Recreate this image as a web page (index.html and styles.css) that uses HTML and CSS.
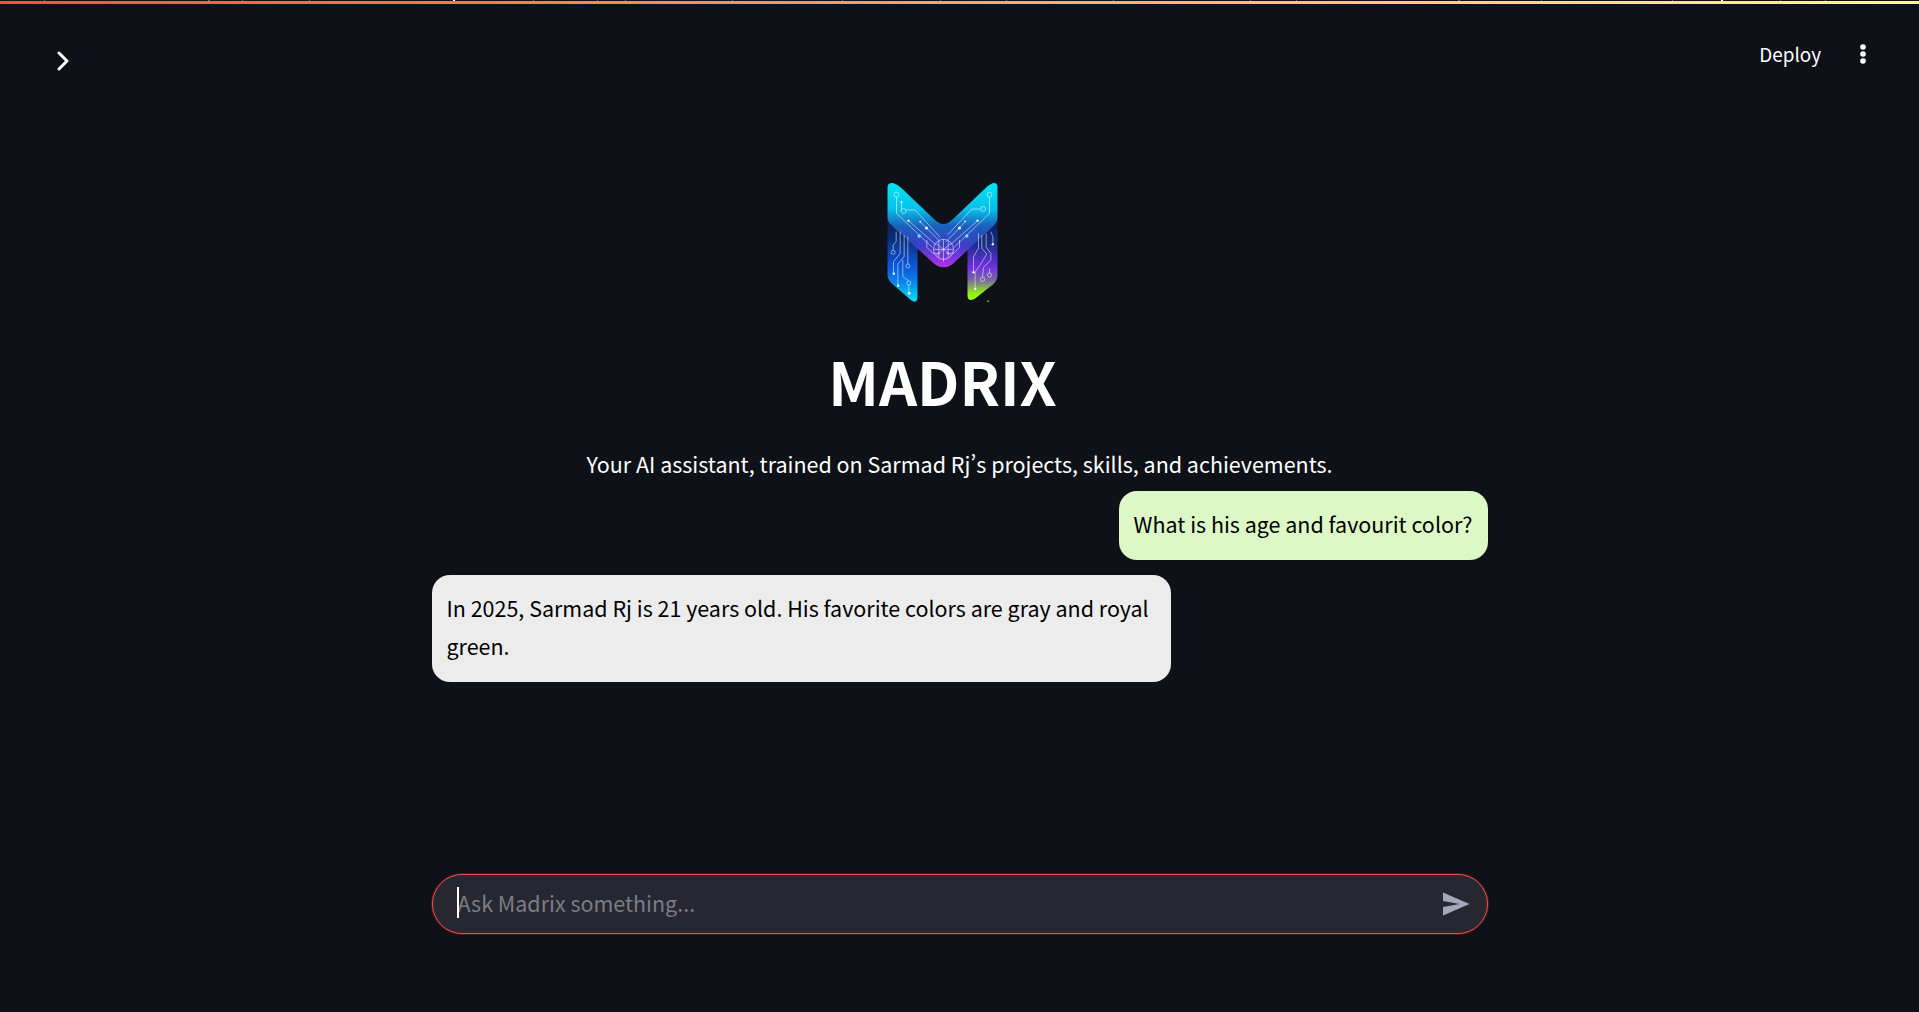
FILE: index.html
```html
<!DOCTYPE html>
<html lang="en">
<head>
  <meta charset="UTF-8">
  <meta name="viewport" content="width=device-width, initial-scale=1.0">
  <title>Madrix</title>
  <link rel="stylesheet" href="styles.css">
</head>
<body>
  <svg class="ticks" width="1919" height="1" viewBox="0 0 1919 1">
    <g fill="#6a6a6a">
      <rect x="44" width="1" height="1"/>
      <rect x="208" width="2" height="1"/>
      <rect x="242" width="1" height="1"/>
      <rect x="309" width="1" height="1"/>
      <rect x="533" width="1" height="1"/>
      <rect x="597" width="1" height="1"/>
      <rect x="625" width="1" height="1"/>
      <rect x="732" width="1" height="1"/>
      <rect x="842" width="1" height="1"/>
      <rect x="940" width="1" height="1"/>
      <rect x="1006" width="1" height="1"/>
      <rect x="1113" width="1" height="1"/>
      <rect x="1250" width="1" height="1"/>
      <rect x="1296" width="1" height="1"/>
      <rect x="1458" width="2" height="1"/>
      <rect x="1541" width="1" height="1"/>
      <rect x="1672" width="1" height="1"/>
      <rect x="1780" width="1" height="1"/>
      <rect x="1825" width="1" height="1"/>
    </g>
    <rect x="453" width="2" height="1" fill="#fff"/>
    <rect x="1721" width="2" height="1" fill="#fff"/>
  </svg>
  <div class="top-line"></div>

  <header class="app-header">
    <button class="icon-btn" aria-label="Open sidebar">
      <svg width="12" height="20" viewBox="0 0 12 20"><path d="M2 2 L10 10 L2 18" fill="none" stroke="#fff" stroke-width="3" stroke-linecap="round" stroke-linejoin="round"/></svg>
    </button>
    <div class="header-actions">
      <span class="deploy">Deploy</span>
      <svg class="kebab" width="8" height="22" viewBox="0 0 8 22"><circle cx="4" cy="4" r="2.8" fill="#fff"/><circle cx="4" cy="11" r="2.8" fill="#fff"/><circle cx="4" cy="18" r="2.8" fill="#fff"/></svg>
    </div>
  </header>

  <main class="chat">
    <div class="hero">
      <svg class="logo" width="165" height="160" viewBox="0 0 494 480">
        <defs>
          <linearGradient id="legLeft" x1="0" y1="180" x2="0" y2="425" gradientUnits="userSpaceOnUse">
            <stop offset="0" stop-color="#0a1f4c"/>
            <stop offset="0.25" stop-color="#0b2f80"/>
            <stop offset="0.55" stop-color="#0a55d8"/>
            <stop offset="0.75" stop-color="#0a80ea"/>
            <stop offset="1" stop-color="#00e4f2"/>
          </linearGradient>
          <linearGradient id="legRight" x1="0" y1="180" x2="0" y2="425" gradientUnits="userSpaceOnUse">
            <stop offset="0" stop-color="#0b2054"/>
            <stop offset="0.3" stop-color="#1a2f8c"/>
            <stop offset="0.58" stop-color="#7030e0"/>
            <stop offset="0.74" stop-color="#7a6aa0"/>
            <stop offset="0.9" stop-color="#90f010"/>
            <stop offset="1" stop-color="#a0ff10"/>
          </linearGradient>
          <linearGradient id="band" x1="0" y1="70" x2="0" y2="328" gradientUnits="userSpaceOnUse">
            <stop offset="0" stop-color="#00e6f4"/>
            <stop offset="0.3" stop-color="#08c0e8"/>
            <stop offset="0.5" stop-color="#1a60bc"/>
            <stop offset="0.72" stop-color="#3a3ec4"/>
            <stop offset="1" stop-color="#c42cf2"/>
          </linearGradient>
        </defs>
        <path d="M82 170 L172 250 L172 408 Q172 434 152 420 L94 370 Q82 358 82 344 Z" fill="url(#legLeft)"/>
        <path d="M412 170 L322 250 L322 406 Q322 428 344 416 L400 372 Q412 360 412 344 Z" fill="url(#legRight)"/>
        <path d="M82 82 Q82 68 98 69 Q112 72 126 86 L222 178 Q250 206 278 178 L374 86 Q388 72 400 69 Q412 68 412 82 L412 172 Q412 186 400 198 L288 302 Q250 342 212 302 L96 198 Q82 186 82 172 Z" fill="url(#band)"/>
        <g fill="none" stroke="#fff" stroke-opacity="0.85" stroke-width="1.8">
          <circle cx="109" cy="104" r="7.5"/>
          <circle cx="388" cy="104" r="7.5"/>
          <circle cx="130" cy="153" r="7.5"/>
          <circle cx="369" cy="147" r="7.5"/>
          <circle cx="99" cy="277" r="6"/>
          <circle cx="143" cy="318" r="6"/>
          <circle cx="146" cy="369" r="6"/>
          <circle cx="367" cy="358" r="6.5"/>
          <circle cx="388" cy="345" r="6"/>
          <path d="M109 112 L109 160 L216 262"/>
          <path d="M388 112 L388 160 L282 262"/>
          <path d="M124 126 L124 147 M137 150 L165 150 L240 232"/>
          <path d="M361 147 L335 147 L262 225"/>
          <path d="M145 182 L228 255"/>
          <path d="M352 182 L270 255"/>
          <path d="M180 185 L240 245 M316 185 L258 245"/>
          <path d="M200 240 L200 262 L218 280 L240 280 M298 240 L298 262 L280 280 L258 280"/>
          <path d="M120 215 L120 280 L100 305 L100 340"/>
          <path d="M132 225 L132 290 L113 312 L113 376"/>
          <path d="M108 215 L108 245 L99 255 L99 271"/>
          <path d="M143 230 L143 312"/>
          <path d="M128 300 L128 350 L146 363 M146 375 L146 398"/>
          <path d="M355 220 L355 265 L340 290 L340 336"/>
          <path d="M365 225 L365 265 L380 282 L360 315 L345 335 L345 386"/>
          <path d="M378 220 L378 262 L392 280 L392 300 L370 322 L367 351"/>
          <path d="M392 215 L398 230 L398 252"/>
          <path d="M388 325 L388 339"/>
          <circle cx="250" cy="268" r="30"/>
          <path d="M250 238 L250 305 M228 250 L272 286 M272 250 L228 286 M220 268 L280 268 M236 243 L236 293 M264 243 L264 293"/>
        </g>
        <g fill="#fff">
          <circle cx="124" cy="126" r="3"/>
          <circle cx="145" cy="182" r="3.5"/>
          <circle cx="199" cy="204" r="4.5"/>
          <circle cx="298" cy="204" r="4.5"/>
          <circle cx="352" cy="182" r="3.5"/>
          <circle cx="315" cy="184" r="2.5"/>
          <circle cx="180" cy="185" r="2.5"/>
          <circle cx="101" cy="341" r="3.5"/>
          <circle cx="114" cy="377" r="3.5"/>
          <circle cx="147" cy="400" r="4"/>
          <circle cx="340" cy="337" r="3.5"/>
          <circle cx="345" cy="387" r="3.5"/>
          <circle cx="398" cy="253" r="3.5"/>
          <circle cx="177" cy="228" r="5" fill="#5fe8ff"/>
          <circle cx="320" cy="228" r="5" fill="#5fe8ff"/>
        </g>
        <circle cx="384" cy="424" r="3" fill="#5fae30"/>
      </svg>
      <h1 class="title">MADRIX</h1>
    </div>
    <p class="tagline">Your AI assistant, trained on Sarmad Rj’s projects, skills, and achievements.</p>

    <div class="messages">
      <div class="bubble user">What is his age and favourit color?</div>
      <div class="bubble bot">In 2025, Sarmad Rj is 21 years old. His favorite colors are gray and royal green.</div>
    </div>

    <form class="chat-input">
      <span class="caret"></span>
      <input type="text" placeholder="Ask Madrix something...">
      <svg class="send" width="28" height="24" viewBox="0 0 28 24"><path d="M1 0.5 L27.5 12 L1 23.5 L1 15 L17.5 12 L1 9 Z" fill="#a3a8b8"/></svg>
    </form>
  </main>
</body>
</html>
```

FILE: styles.css
```css
* {
  box-sizing: border-box;
}
body {
  margin: 0;
  height: 100vh;
  overflow: hidden;
  background: #0e1117;
  color: white;
  font-family: "Noto Sans CJK SC", "Noto Sans", sans-serif;
  font-size: 21.47px;
  font-variant-east-asian: proportional-width;
  display: flex;
  flex-direction: column;
}
.ticks {
  display: block;
  flex: none;
}
.top-line {
  height: 3px;
  background: linear-gradient(90deg, #ff4b4b, #fffd80);
}
.app-header {
  display: flex;
  justify-content: space-between;
  align-items: flex-start;
  padding: 47px 52px 0 57px;
}
.icon-btn {
  background: none;
  border: none;
  padding: 0;
  display: flex;
}
.header-actions {
  display: flex;
  align-items: center;
  gap: 38px;
  margin-top: -10px;
}
.deploy {
  font-size: 18.9px;
  line-height: 26px;
}
.kebab {
  display: block;
}
.chat {
  flex: 1;
  width: 1056px;
  margin: 0 auto;
  display: flex;
  flex-direction: column;
}
.hero {
  display: flex;
  flex-direction: column;
  align-items: center;
  padding-right: 34px;
  margin-top: 89px;
}
.logo {
  display: block;
  margin-bottom: 20px;
}
.title {
  margin: 0;
  font-size: 59.4px;
  font-weight: 700;
  line-height: 80px;
}
.tagline {
  margin: 25px 0 0;
  text-align: center;
  line-height: 38px;
}
.messages {
  display: flex;
  flex-direction: column;
  margin-top: 8px;
}
.bubble {
  padding: 14px 15px 17px;
  border-radius: 18px;
  color: black;
  line-height: 38px;
}
.user {
  align-self: flex-end;
  background: #dcf8c6;
}
.bot {
  align-self: flex-start;
  max-width: 739px;
  margin-top: 15px;
  background: #ececec;
}
.chat-input {
  position: relative;
  display: flex;
  align-items: center;
  height: 60px;
  margin-top: 192px;
  padding: 0 17px 0 25px;
  background: #262730;
  border: 1px solid #ff4b4b;
  box-shadow: 0 0 0 1px rgba(255, 75, 75, 0.2);
  border-radius: 30px;
}
.chat-input input {
  flex: 1;
  background: none;
  border: none;
  outline: none;
  padding: 0 0 4px;
  color: white;
  font: inherit;
}
.chat-input input::placeholder {
  color: #7c7d84;
  opacity: 1;
}
.caret {
  position: absolute;
  left: 24px;
  top: 12px;
  width: 2px;
  height: 31px;
  background: white;
}
.send {
  display: block;
}
```
